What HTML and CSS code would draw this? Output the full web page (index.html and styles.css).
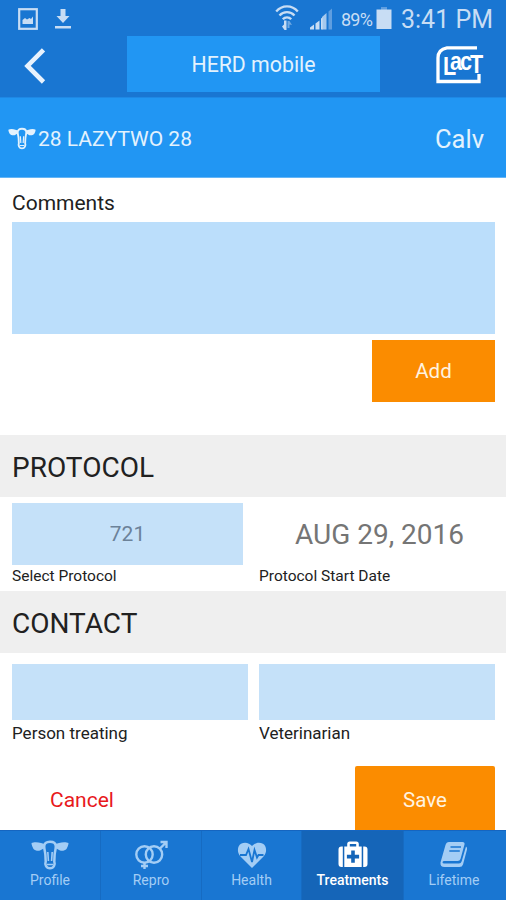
FILE: index.html
```html
<!DOCTYPE html>
<html lang="en">
<head>
  <meta charset="UTF-8" />
  <meta name="viewport" content="width=device-width, initial-scale=1.0"/>
  <title>HERD mobile</title>
  <link rel="stylesheet" href="styles.css">
</head>
<body>
  <svg class="sprite" width="0" height="0" aria-hidden="true">
    <symbol id="cow" viewBox="0 0 38 30">
      <path fill="currentColor" d="M.5 3C2.500 2 7 2 10 3l3.500 1v4L9 10.500c-2 .5-5 .3-6.500-1.500C1.500 7 .5 5 .5 3ZM37.500 3C35.500 2 31 2 28 3l-3.500 1v4l4.500 2.500c2 .5 5 .3 6.500-1.500 1-2 2-4 2-6Z"/>
      <path fill="none" stroke="currentColor" stroke-width="2.500" d="M13.200 6.500C13.200 3.500 15 1.800 19 1.800s5.800 1.700 5.800 4.700c0 3-1 5-1.200 8.500l-.3 6.500c1 3-.3 6.800-4.300 6.800s-5.300-3.800-4.300-6.800l-.3-6.500c-.2-3.500-1.200-5.500-1.200-8.500Z"/>
      <path fill="none" stroke="currentColor" stroke-width="1.600" d="M16.800 12l.6 9M21.200 12l-.6 9M16 24.500h6"/>
    </symbol>
  </svg>

  <header>
    <div class="status-bar">
      <svg class="status-picture" width="20" height="22" viewBox="0 0 20 22">
        <rect x="1.200" y="1.200" width="17.600" height="19.600" fill="none" stroke="currentColor" stroke-width="2.200"/>
        <path fill="currentColor" d="M4.500 16v-4l2.500-2 2 1.500L11.500 10l1.500 1 2-2.500V16Z"/>
      </svg>
      <svg class="status-download" width="16" height="20" viewBox="0 0 16 20">
        <path fill="currentColor" d="M5.500 0h5v7h4L8 14 1.500 7h4ZM0 17h16v2.500H0Z"/>
      </svg>
      <svg class="status-wifi" width="24" height="26" viewBox="0 0 24 26">
        <g fill="none" stroke="currentColor" stroke-width="2.300">
          <path d="M1.200 6.500C7-.3 17-.3 22.800 6.500M4.500 10.500c4-4.500 11-4.500 15 0M7.800 14.300c2.200-2.600 6.200-2.600 8.400 0"/>
        </g>
        <path fill="currentColor" d="M9 15.500h2.500V25H9.500L7 21.500l2-2Z"/>
        <path fill="currentColor" opacity=".5" d="M12.500 16h2l2.500 4-2.500-.5V23h-2Z"/>
      </svg>
      <svg class="status-signal" width="24" height="22" viewBox="0 0 24 22">
        <path fill="currentColor" d="M1 21.500v-2l4-3v5ZM6.500 21.500v-6l4-3v9ZM12 21.500v-11l1.500-1v12Z"/>
        <path fill="currentColor" opacity=".8" d="M13 21.500V9l4.500-4v16.500Z"/>
        <path fill="currentColor" opacity=".4" d="M19.500 21.500V3.500L23 .5v21Z"/>
      </svg>
      <span class="battery-text">89%</span>
      <svg class="status-battery" width="16" height="22" viewBox="0 0 16 22">
        <path fill="currentColor" opacity=".4" d="M5 0h6v3H5Z"/>
        <path fill="currentColor" d="M.5 2.500h15V22H.5Z"/>
      </svg>
      <span class="clock">3:41 PM</span>
    </div>
    <div class="title-bar">
      <a href="#" class="back" aria-label="Back">
        <svg width="22" height="36" viewBox="0 0 22 36">
          <path fill="none" stroke="currentColor" stroke-width="4.600" d="M19.500 1.800L3.500 18l16 16"/>
        </svg>
      </a>
      <h1>HERD mobile</h1>
      <svg class="logo" width="52" height="40" viewBox="0 0 52 40">
        <path fill="none" stroke="currentColor" stroke-width="3.300" d="M41 2.800H11C5 3.800 2 7 2 13v23.500h41V29"/>
        <text class="logo-text" transform="scale(.83 1)" font-size="26" x="8.500 17 29 41" y="30.500 25.500 25.500 28">LacT</text>
      </svg>
    </div>
  </header>

  <div class="animal-bar">
    <svg class="animal-icon" width="28" height="23"><use href="#cow"/></svg>
    <span class="animal-name">28 LAZYTWO 28</span>
    <span class="animal-event">Calv</span>
  </div>

  <main>
    <section class="comments">
      <label for="comments">Comments</label>
      <textarea id="comments"></textarea>
      <button class="btn btn-add">Add</button>
    </section>

    <h2>PROTOCOL</h2>
    <div class="row protocol">
      <div class="field">
        <button class="select" id="protocol">721</button>
        <label for="protocol">Select Protocol</label>
      </div>
      <div class="field">
        <div class="date">AUG 29, 2016</div>
        <label>Protocol Start Date</label>
      </div>
    </div>

    <h2>CONTACT</h2>
    <div class="row contact">
      <div class="field">
        <input type="text" id="person">
        <label for="person">Person treating</label>
      </div>
      <div class="field">
        <input type="text" id="vet">
        <label for="vet">Veterinarian</label>
      </div>
    </div>

    <div class="actions">
      <a href="#" class="cancel">Cancel</a>
      <button class="btn btn-save">Save</button>
    </div>
  </main>

  <nav>
    <a href="#">
      <svg width="38" height="30"><use href="#cow"/></svg>
      <span>Profile</span>
    </a>
    <a href="#">
      <svg width="34" height="30" viewBox="0 0 34 30">
        <g fill="none" stroke="currentColor" stroke-width="2.400">
          <circle cx="10.500" cy="14.500" r="8.200"/>
          <circle cx="20" cy="14.500" r="8.200"/>
          <path d="M26 8.500l6-6M26.500 2h6v6M10.500 23v6M7 26h7"/>
        </g>
      </svg>
      <span>Repro</span>
    </a>
    <a href="#">
      <svg width="30" height="30" viewBox="0 0 30 30">
        <path fill="currentColor" d="M15 28L3.500 16.500C-.5 12 .5 6 4 3.800 8 1.500 12.500 3 15 6c2.500-3 7-4.500 11-2.200C29.500 6 30.500 12 26.500 16.500Z"/>
        <path class="pulse" d="M3 15h6l2.500-6 3.500 13 2.500-12 2.500 7.500 1.500-2.500h5"/>
      </svg>
      <span>Health</span>
    </a>
    <a href="#" class="active">
      <svg width="30" height="30" viewBox="0 0 30 30">
        <path fill="none" stroke="currentColor" stroke-width="2.600" d="M10.500 7V4q0-1.200 1.200-1.200h6.600q1.200 0 1.200 1.200v3"/>
        <path fill="currentColor" d="M3.500 6.500H4.800V27H3.500Q.5 27 .5 24V9.500Q.5 6.500 3.500 6.500ZM6.300 6.500h17.400V27H6.300ZM25.200 6.500h1.300q3 0 3 3V24q0 3-3 3h-1.300Z"/>
        <path class="cross" d="M13.200 10.500h3.600v4.300h4.300v3.600h-4.300v4.300h-3.600v-4.300H8.900v-3.600h4.300Z"/>
      </svg>
      <span>Treatments</span>
    </a>
    <a href="#">
      <svg width="28" height="30" viewBox="0 0 28 30">
        <path fill="currentColor" d="M9 2h13.500q2.500 0 2 2.500L20.500 19q-.6 2-2.800 2H4.500q-2 0-2 1.300t2 1.200h14.500q2 0 2.700-2.300L26 6.500q1.500 1 1 3L23 24.500Q22.200 27 19.500 27H4.500Q0 27 .5 22.500L5.500 5Q6.400 2 9 2Z"/>
        <path class="book-lines" d="M10.500 7h10.500M9.300 11h10.500"/>
      </svg>
      <span>Lifetime</span>
    </a>
  </nav>
</body>
</html>
```

FILE: styles.css
```css
* {
  box-sizing: border-box;
}
body {
  font-family: Roboto, 'Liberation Sans', sans-serif;
  background: #fff;
  color: #212121;
  margin: 0;
  height: 900px;
  display: flex;
  flex-direction: column;
  overflow: hidden;
}
button,
input,
textarea {
  font-family: inherit;
  border: none;
  border-radius: 0;
  padding: 0;
  margin: 0;
  outline: none;
}
a {
  text-decoration: none;
}
svg {
  display: block;
  flex: none;
}
.sprite {
  position: absolute;
}
header {
  flex: none;
  background: #1976d2;
  height: 98px;
  border-bottom: 1px solid #1e88e5;
}
.status-bar {
  height: 36px;
  display: flex;
  align-items: flex-start;
  padding: 8px 14px 0 18px;
  color: #c8ddf4;
}
.status-download {
  margin: 1px auto 0 17px;
}
.status-wifi {
  margin: -3px 10px 0 0;
}
.battery-text {
  width: 32px;
  margin: 1px 3px 0 8px;
  font-size: 18px;
  line-height: 22px;
  letter-spacing: -0.8px;
}
.status-battery {
  margin-top: -1px;
}
.clock {
  width: 91px;
  margin-left: 9px;
  font-size: 25px;
  line-height: 24px;
  white-space: nowrap;
}
.title-bar {
  display: flex;
  padding: 0 18px 0 24px;
}
.back {
  color: #e8f2fd;
  margin-top: 12px;
}
h1 {
  width: 253px;
  height: 56px;
  margin: 0 56px 0 81px;
  background: #2196f3;
  color: #e3f2fd;
  font-size: 21.3px;
  font-weight: 400;
  line-height: 57px;
  text-align: center;
}
.logo {
  color: #fff;
  margin-top: 9px;
}
.logo-text {
  font-family: 'Liberation Sans', sans-serif;
  font-weight: 700;
  fill: #fff;
}
.animal-bar {
  display: flex;
  flex: none;
  align-items: center;
  height: 80px;
  padding: 2px 22px 0 8px;
  background: #2196f3;
  border-bottom: 1px solid #64b5f6;
  color: #e3f2fd;
}
.animal-icon {
  margin-right: 2px;
}
.animal-name {
  font-size: 21px;
}
.animal-event {
  margin-left: auto;
  font-size: 25.5px;
}
main {
  flex: 1;
  min-height: 0;
  overflow: hidden;
}
.comments {
  display: flex;
  flex-direction: column;
  height: 257px;
  padding: 13px 11px 0 12px;
}
.comments label {
  font-size: 21px;
  line-height: 24px;
}
textarea {
  height: 112px;
  margin-top: 7px;
  background: #bbdefb;
  resize: none;
}
.btn {
  background: #fb8c00;
  color: #fff3e0;
  font-size: 20.5px;
}
.btn-add {
  align-self: flex-end;
  width: 123px;
  height: 62px;
  margin-top: 6px;
}
h2 {
  height: 62px;
  margin: 0;
  padding-left: 12px;
  background: #efefef;
  font-size: 28px;
  font-weight: 400;
  line-height: 65px;
}
.row {
  display: grid;
  padding: 0 11px 0 12px;
}
.row label {
  display: block;
  font-size: 15.5px;
  line-height: 22px;
}
.protocol {
  grid-template-columns: 231px 1fr;
  column-gap: 16px;
  height: 94px;
  padding-top: 6px;
}
.select {
  display: block;
  width: 100%;
  height: 62px;
  background: #c5e1f9;
  color: #6c8299;
  font-size: 21px;
}
.date {
  height: 62px;
  padding-left: 5px;
  color: #757575;
  font-size: 28px;
  line-height: 64px;
  text-align: center;
  white-space: nowrap;
}
.contact {
  grid-template-columns: 1fr 1fr;
  column-gap: 11px;
  height: 113px;
  padding-top: 11px;
}
.contact label {
  margin-top: 2px;
  font-size: 17px;
}
.contact input {
  display: block;
  width: 100%;
  height: 56px;
  background: #c5e1f9;
}
.actions {
  display: flex;
  justify-content: space-between;
  padding: 0 11px 0 50px;
}
.cancel {
  color: #e8191c;
  font-size: 21px;
  line-height: 68px;
}
.btn-save {
  width: 140px;
  height: 68px;
  border-radius: 2px 2px 0 0;
}
nav {
  display: grid;
  flex: none;
  grid-template-columns: 101px 101px 100px 102px 1fr;
  height: 70px;
  background: #1976d2;
  border-top: 1px solid #1565c0;
}
nav a {
  display: flex;
  flex-direction: column;
  align-items: center;
  padding-top: 9px;
  border-right: 1px solid #166bc2;
  color: #a3cdf5;
  font-size: 14px;
  line-height: 21px;
}
nav a:last-child {
  border-right: none;
  padding-right: 2px;
}
nav .active {
  background: #1565b8;
  color: #fff;
  font-weight: 500;
}
.pulse {
  fill: none;
  stroke: #1976d2;
  stroke-width: 1.8;
}
.cross {
  fill: #1565b8;
}
.book-lines {
  fill: none;
  stroke: #1976d2;
  stroke-width: 1.5;
}
```
